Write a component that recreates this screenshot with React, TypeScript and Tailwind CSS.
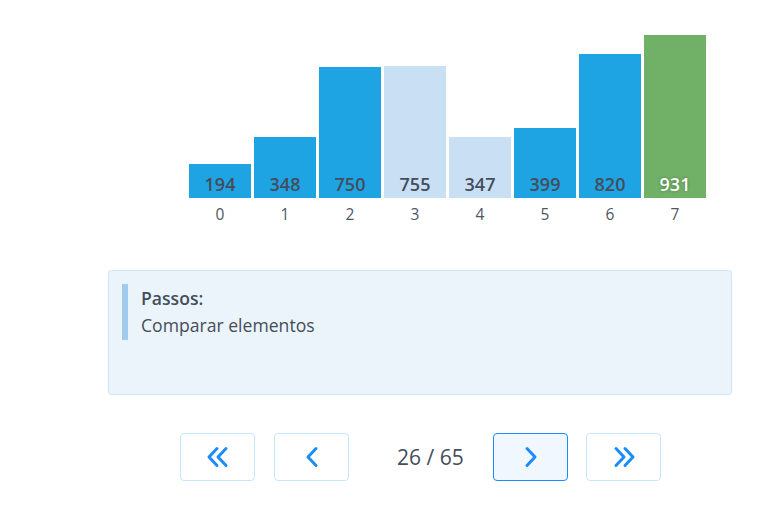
const bars = [
  { value: 194, kind: "normal" },
  { value: 348, kind: "normal" },
  { value: 750, kind: "normal" },
  { value: 755, kind: "compare" },
  { value: 347, kind: "compare" },
  { value: 399, kind: "normal" },
  { value: 820, kind: "normal" },
  { value: 931, kind: "sorted" },
];

// chevron glyphs, drawn to match the pager's angle icons
const Chevron = ({ dir, double }: { dir: "left" | "right"; double?: boolean }) => {
  const w = double ? 24 : 14;
  const flip = dir === "right" ? `translate(${w} 0) scale(-1 1)` : undefined;
  return (
    <svg width={w} height={22} viewBox={`0 0 ${w} 22`} fill="none" stroke="#1a8cff" strokeWidth={3} strokeLinecap="round" strokeLinejoin="round">
      <g transform={flip}>
        <polyline points="11,2.5 3,11 11,19.5" />
        {double && <polyline points="20,2.5 12,11 20,19.5" />}
      </g>
    </svg>
  );
};

const App = () => {
  return (
    <div
      className="w-[768px] h-[528px] bg-white text-[#454d5a] overflow-hidden"
      style={{ fontFamily: '"Open Sans", "Noto Sans", sans-serif' }}
    >
      <div className="ml-[108px] w-[624px] pt-[35px]">
        {/* Chart */}
        <div className="pl-[81px]">
          <div className="flex items-end gap-[3px] h-[163px]">
            {bars.map((bar, i) => (
              <div
                key={i}
                className={
                  "w-[62px] flex items-end justify-center pb-[1px] " +
                  (bar.kind === "normal"
                    ? "bg-[#1ea3e3]"
                    : bar.kind === "compare"
                    ? "bg-[#c9e0f4]"
                    : "bg-[#71b167]")
                }
                style={{ height: Math.round(bar.value * 0.175) }}
              >
                <span
                  className={
                    "text-[18px] font-semibold leading-[26px] " +
                    (bar.kind === "sorted"
                      ? "text-white [text-shadow:0_0_3px_rgba(0,0,0,0.35)]"
                      : "text-[#454d5a]")
                  }
                >
                  {bar.value}
                </span>
              </div>
            ))}
          </div>
          <div className="flex gap-[3px] mt-[4px]">
            {bars.map((_, i) => (
              <div key={i} className="w-[62px] text-center text-[15.5px] leading-[24px] text-[#4f5663]">
                {i}
              </div>
            ))}
          </div>
        </div>

        {/* Steps box */}
        <div className="mt-[44px] h-[125px] rounded-[3px] border border-[#cfe6f7] bg-[#ebf4fb] pl-[13px] pt-[13px]">
          <div className="border-l-[6px] border-[#a1cbee] pl-[13px] py-[1px]">
            <div className="text-[17.6px] font-semibold leading-[27px] text-[#454d5a]">Passos:</div>
            <div className="text-[17.6px] leading-[27px] text-[#454d5a]">Comparar elementos</div>
          </div>
        </div>

        {/* Pagination */}
        <div className="mt-[38px] flex items-center pl-[72px]">
          <button className="w-[75px] h-[48px] rounded-[4px] border border-[#c6e6fb] bg-white flex items-center justify-center">
            <Chevron dir="left" double />
          </button>
          <button className="ml-[19px] w-[75px] h-[48px] rounded-[4px] border border-[#c6e6fb] bg-white flex items-center justify-center">
            <Chevron dir="left" />
          </button>
          <div className="w-[144px] pl-[48px] text-[21px] text-[#454d5a] leading-[48px] whitespace-nowrap">26 / 65</div>
          <button className="w-[75px] h-[48px] rounded-[4px] border border-[#1a8cff] bg-[#f0f7ff] flex items-center justify-center">
            <Chevron dir="right" />
          </button>
          <button className="ml-[18px] w-[75px] h-[48px] rounded-[4px] border border-[#c6e6fb] bg-white flex items-center justify-center">
            <Chevron dir="right" double />
          </button>
        </div>
      </div>
    </div>
  );
};

export default App;
